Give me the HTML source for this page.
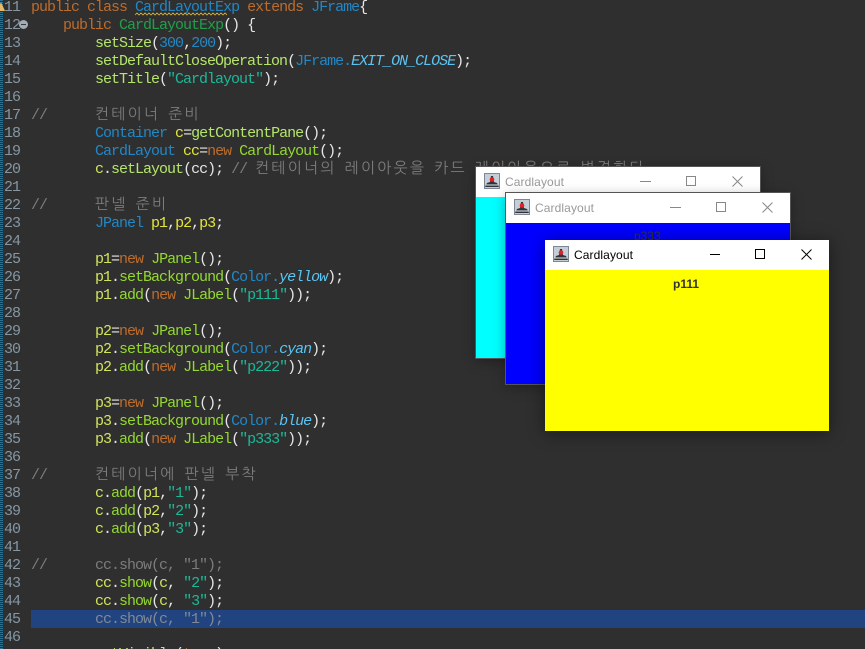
<!DOCTYPE html>
<html lang="ko"><head><meta charset="utf-8"><style>
html,body{margin:0;padding:0;background:#2f2f2f}
#p{position:relative;width:865px;height:649px;overflow:hidden;background:#2f2f2f;font:15px/20px "Liberation Mono",monospace;letter-spacing:-1px;color:#dcdcdc}
.l{position:absolute;left:31px;height:18px;white-space:pre;color:#e6e6e6}
.n{position:absolute;left:4px;height:18px;color:#8497a3;white-space:pre}
.w{color:#bd6c2c}.c{color:#2a93d0}.m{color:#b4e66a}.g{color:#94d92e}.v{color:#d2e45c}.y{color:#e4e63a}.s{color:#1cb898}.o{color:#7c7c7c}.d{color:#1fa04a}
.i{font-style:italic;font-weight:normal;color:#5cc4f2}.b{color:#2287c4}
.k{font:15px/0 "NanumGothic","Noto Sans CJK KR",sans-serif;letter-spacing:2.2px;color:#7c7c7c}
.win{position:absolute;width:284px;background:#fff}
.t{position:absolute;font:12px/16px "Liberation Sans",sans-serif;letter-spacing:.1px;white-space:pre}
.lb{position:absolute;font:12px/14px "Liberation Sans",sans-serif;letter-spacing:0;white-space:pre}
svg{position:absolute;overflow:visible}
</style></head><body><div id="p">
<div style="position:absolute;left:0;top:0;width:3px;height:649px;background:repeating-linear-gradient(180deg,#2f6f8e 0 1px,#2f2f2f 1px 2px)"></div>
<svg style="left:0;top:0" width="6" height="12"><path d="M-3 11L1 2l4 9z" fill="#e8b968"/></svg>

<div style="position:absolute;left:31px;top:610px;width:834px;height:18px;background:#21437f"></div>

<div class="n" style="top:-2px">11</div><div class="l" style="top:-2px"><span class="w">public class</span> <span class="b">CardLayoutExp</span> <span class="w">extends</span> <span class="b">JFrame</span>{</div>
<svg style="left:135px;top:13px" width="104" height="3"><path d="M0 2l2-2 2 2 2-2 2 2 2-2 2 2 2-2 2 2 2-2 2 2 2-2 2 2 2-2 2 2 2-2 2 2 2-2 2 2 2-2 2 2 2-2 2 2 2-2 2 2 2-2 2 2 2-2 2 2 2-2 2 2 2-2 2 2 2-2 2 2 2-2 2 2 2-2 2 2 2-2 2 2 2-2 2 2 2-2 2 2 2-2 2 2" fill="none" stroke="#d8b63a" stroke-width=".8"/></svg>
<div class="n" style="top:16px">12</div><div class="l" style="top:16px">    <span class="w">public</span> <span class="d">CardLayoutExp</span>() {</div>
<svg style="left:19px;top:20px" width="9" height="9"><circle cx="4.5" cy="4.5" r="4.5" fill="#a3abb3"/><path d="M2 4.5h5" stroke="#33383c" stroke-width="1"/></svg>
<div class="n" style="top:34px">13</div><div class="l" style="top:34px">        <span class="m">setSize</span>(<span class="b">300</span>,<span class="b">200</span>);</div>
<div class="n" style="top:52px">14</div><div class="l" style="top:52px">        <span class="m">setDefaultCloseOperation</span>(<span class="b">JFrame.</span><span class="i">EXIT_ON_CLOSE</span>);</div>
<div class="n" style="top:70px">15</div><div class="l" style="top:70px">        <span class="m">setTitle</span>(<span class="s">"Cardlayout"</span>);</div>
<div class="n" style="top:88px">16</div>
<div class="n" style="top:106px">17</div><div class="l" style="top:106px"><span class="o">//</span>      <span class="k">컨테이너</span> <span class="k">준비</span></div>
<div class="n" style="top:124px">18</div><div class="l" style="top:124px">        <span class="b">Container</span> <span class="y">c</span>=<span class="m">getContentPane</span>();</div>
<div class="n" style="top:142px">19</div><div class="l" style="top:142px">        <span class="b">CardLayout</span> <span class="y">cc</span>=<span class="w">new</span> <span class="g">CardLayout</span>();</div>
<div class="n" style="top:160px">20</div><div class="l" style="top:160px">        <span class="v">c</span>.<span class="m">setLayout</span>(cc); <span class="o">//</span> <span class="k">컨테이너의</span> <span class="k">레이아웃을</span> <span class="k">카드</span> <span class="k">레이아웃으로</span> <span class="k">변경한다</span></div>
<div class="n" style="top:178px">21</div>
<div class="n" style="top:196px">22</div><div class="l" style="top:196px"><span class="o">//</span>      <span class="k">판넬</span> <span class="k">준비</span></div>
<div class="n" style="top:214px">23</div><div class="l" style="top:214px">        <span class="b">JPanel</span> <span class="y">p1</span>,<span class="y">p2</span>,<span class="y">p3</span>;</div>
<div class="n" style="top:232px">24</div>
<div class="n" style="top:250px">25</div><div class="l" style="top:250px">        <span class="v">p1</span>=<span class="w">new</span> <span class="g">JPanel</span>();</div>
<div class="n" style="top:268px">26</div><div class="l" style="top:268px">        <span class="v">p1</span>.<span class="g">setBackground</span>(<span class="b">Color.</span><span class="i">yellow</span>);</div>
<div class="n" style="top:286px">27</div><div class="l" style="top:286px">        <span class="v">p1</span>.<span class="g">add</span>(<span class="w">new</span> <span class="g">JLabel</span>(<span class="s">"p111"</span>));</div>
<div class="n" style="top:304px">28</div>
<div class="n" style="top:322px">29</div><div class="l" style="top:322px">        <span class="v">p2</span>=<span class="w">new</span> <span class="g">JPanel</span>();</div>
<div class="n" style="top:340px">30</div><div class="l" style="top:340px">        <span class="v">p2</span>.<span class="g">setBackground</span>(<span class="b">Color.</span><span class="i">cyan</span>);</div>
<div class="n" style="top:358px">31</div><div class="l" style="top:358px">        <span class="v">p2</span>.<span class="g">add</span>(<span class="w">new</span> <span class="g">JLabel</span>(<span class="s">"p222"</span>));</div>
<div class="n" style="top:376px">32</div>
<div class="n" style="top:394px">33</div><div class="l" style="top:394px">        <span class="v">p3</span>=<span class="w">new</span> <span class="g">JPanel</span>();</div>
<div class="n" style="top:412px">34</div><div class="l" style="top:412px">        <span class="v">p3</span>.<span class="g">setBackground</span>(<span class="b">Color.</span><span class="i">blue</span>);</div>
<div class="n" style="top:430px">35</div><div class="l" style="top:430px">        <span class="v">p3</span>.<span class="g">add</span>(<span class="w">new</span> <span class="g">JLabel</span>(<span class="s">"p333"</span>));</div>
<div class="n" style="top:448px">36</div>
<div class="n" style="top:466px">37</div><div class="l" style="top:466px"><span class="o">//</span>      <span class="k">컨테이너에</span> <span class="k">판넬</span> <span class="k">부착</span></div>
<div class="n" style="top:484px">38</div><div class="l" style="top:484px">        <span class="v">c</span>.<span class="g">add</span>(<span class="v">p1</span>,<span class="s">"1"</span>);</div>
<div class="n" style="top:502px">39</div><div class="l" style="top:502px">        <span class="v">c</span>.<span class="g">add</span>(<span class="v">p2</span>,<span class="s">"2"</span>);</div>
<div class="n" style="top:520px">40</div><div class="l" style="top:520px">        <span class="v">c</span>.<span class="g">add</span>(<span class="v">p3</span>,<span class="s">"3"</span>);</div>
<div class="n" style="top:538px">41</div>
<div class="n" style="top:556px">42</div><div class="l" style="top:556px"><span class="o">//      cc.show(c, "1");</span></div>
<div class="n" style="top:574px">43</div><div class="l" style="top:574px">        <span class="v">cc</span>.<span class="g">show</span>(<span class="v">c</span>, <span class="s">"2"</span>);</div>
<div class="n" style="top:592px">44</div><div class="l" style="top:592px">        <span class="v">cc</span>.<span class="g">show</span>(<span class="v">c</span>, <span class="s">"3"</span>);</div>
<div class="n" style="top:610px">45</div><div class="l" style="top:610px;color:#7f8a96">        cc.show(c, "1");</div>
<div class="n" style="top:628px">46</div>
<div class="l" style="top:645px">        <span class="m">setVisible</span>(<span class="w">true</span>);</div>

<!-- Window 1 -->
<div class="win" style="left:476px;top:167px;height:191px;box-shadow:0 0 0 1px #555,0 3px 12px rgba(0,0,0,.35)">
<div style="position:absolute;left:0;right:0;top:30px;bottom:0;background:#0ff"></div>
<svg style="left:8px;top:6px" width="16" height="16"><rect width="16" height="16" fill="#c4ced6"/><rect x=".5" y=".5" width="15" height="15" fill="none" stroke="#7d8894"/><path d="M1 14l2-4 3-1 1-6h2l1 6 3 1 2 4z" fill="#2f343c"/><path d="M2 12h12" stroke="#e8e8e8"/><circle cx="8" cy="6.5" r="2.3" fill="#e0202a"/></svg>
<div class="t" style="left:29px;top:7px;color:#999">Cardlayout</div>
<svg style="left:164px;top:14px" width="11" height="1"><path d="M0 .5h11" stroke="#888"/></svg>
<svg style="left:210px;top:9px" width="10" height="10"><rect x=".5" y=".5" width="9" height="9" fill="none" stroke="#888"/></svg>
<svg style="left:256px;top:9px" width="11" height="11"><path d="M.5.5l10 10M10.5.5l-10 10" stroke="#888"/></svg>
</div>
<!-- Window 2 -->
<div class="win" style="left:506px;top:193px;height:191px;box-shadow:0 0 0 1px #555,0 3px 12px rgba(0,0,0,.35)">
<div style="position:absolute;left:0;right:0;top:30px;bottom:0;background:#00f"></div>
<div class="lb" style="left:128px;top:36px;color:#333">p333</div>
<svg style="left:8px;top:6px" width="16" height="16"><rect width="16" height="16" fill="#c4ced6"/><rect x=".5" y=".5" width="15" height="15" fill="none" stroke="#7d8894"/><path d="M1 14l2-4 3-1 1-6h2l1 6 3 1 2 4z" fill="#2f343c"/><path d="M2 12h12" stroke="#e8e8e8"/><circle cx="8" cy="6.5" r="2.3" fill="#e0202a"/></svg>
<div class="t" style="left:29px;top:7px;color:#999">Cardlayout</div>
<svg style="left:164px;top:14px" width="11" height="1"><path d="M0 .5h11" stroke="#888"/></svg>
<svg style="left:210px;top:9px" width="10" height="10"><rect x=".5" y=".5" width="9" height="9" fill="none" stroke="#888"/></svg>
<svg style="left:256px;top:9px" width="11" height="11"><path d="M.5.5l10 10M10.5.5l-10 10" stroke="#888"/></svg>
</div>
<!-- Window 3 -->
<div class="win" style="left:545px;top:240px;height:191px;box-shadow:0 2px 16px rgba(0,0,0,.45)">
<div style="position:absolute;left:0;right:0;top:30px;bottom:0;background:#ff0"></div>
<div class="lb" style="left:128px;top:37px;color:#333;font-weight:bold">p111</div>
<svg style="left:8px;top:6px" width="16" height="16"><rect width="16" height="16" fill="#c4ced6"/><rect x=".5" y=".5" width="15" height="15" fill="none" stroke="#7d8894"/><path d="M1 14l2-4 3-1 1-6h2l1 6 3 1 2 4z" fill="#2f343c"/><path d="M2 12h12" stroke="#e8e8e8"/><circle cx="8" cy="6.5" r="2.3" fill="#e0202a"/></svg>
<div class="t" style="left:29px;top:7px;color:#000">Cardlayout</div>
<svg style="left:165px;top:14px" width="11" height="1"><path d="M0 .5h10" stroke="#000"/></svg>
<svg style="left:210px;top:9px" width="10" height="10"><rect x=".5" y=".5" width="9" height="9" fill="none" stroke="#000"/></svg>
<svg style="left:256px;top:9px" width="11" height="11"><path d="M.5.5l10 10M10.5.5l-10 10" stroke="#000"/></svg>
</div>
</div></body></html>
